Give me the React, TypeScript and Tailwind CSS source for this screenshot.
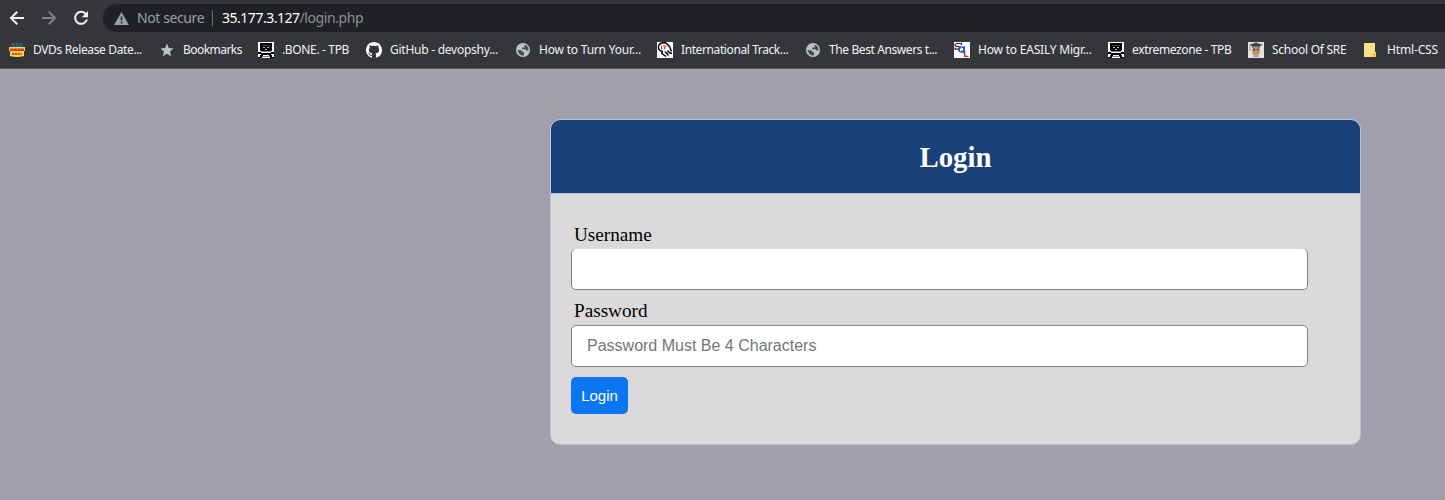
import type { ReactNode } from "react";

function DvdIcon() {
  return (
    <svg width="16" height="16" viewBox="0 0 16 16">
      <path d="M2 1H14L15 5H2Z" fill="#1f5068" />
      <path d="M3 2H5M7 2H9M11 2H13M4 4H6M8 4H12" stroke="#3f7488" />
      <path d="M0 5H16V9H15V14Q8 16 1 14V9H0Z" fill="#f7d84b" />
      <path d="M1 6.5H15V9H1Z" fill="#d8341c" />
      <path d="M4 7.6H5M8 7.6H9M11 7.6H12" stroke="#f0902c" />
      <path d="M3 10.8H13V13H3Z" fill="#e0532a" />
      <path d="M5 11.9H6M8 11.9H9M11 11.9H12" stroke="#f7d84b" />
    </svg>
  );
}

function StarIcon() {
  return (
    <svg width="16" height="16" viewBox="0 0 16 16">
      <path d="M8 1.6 9.8 6 14.6 6.4 11 9.5 12.1 14.2 8 11.7 3.9 14.2 5 9.5 1.4 6.4 6.2 6Z" fill="#bdc1c6" />
    </svg>
  );
}

function SkullIcon() {
  return (
    <svg width="16" height="16" viewBox="0 0 16 16">
      <path d="M0 0H16V16H0Z" fill="#fff" />
      <path d="M2 1H14V8L13 9.5H3L2 8Z" fill="#000" />
      <path d="M4 3.5H12" stroke="#444" />
      <path d="M5 5.5H7M9 5.5H11M7 7.5H9" stroke="#bbb" />
      <path d="M0 10H3V11H13V10H16V12H13V13H3V12H0Z" fill="#000" />
      <path d="M2 13H5V14H11V13H14V15H16V16H12V14.5H4V16H0V15H2Z" fill="#000" />
    </svg>
  );
}

function GithubIcon() {
  return (
    <svg width="16" height="16" viewBox="0 0 16 16" fill="#fff">
      <path d="M8 0C3.58 0 0 3.58 0 8c0 3.54 2.29 6.53 5.47 7.59.4.07.55-.17.55-.38 0-.19-.01-.82-.01-1.49-2.01.37-2.53-.49-2.69-.94-.09-.23-.48-.94-.82-1.13-.28-.15-.68-.52-.01-.53.63-.01 1.08.58 1.23.82.72 1.21 1.87.87 2.33.66.07-.52.28-.87.51-1.07-1.78-.2-3.64-.89-3.64-3.95 0-.87.31-1.59.82-2.15-.08-.2-.36-1.02.08-2.12 0 0 .67-.21 2.2.82.64-.18 1.32-.27 2-.27s1.36.09 2 .27c1.53-1.04 2.2-.82 2.2-.82.44 1.1.16 1.92.08 2.12.51.56.82 1.27.82 2.15 0 3.07-1.87 3.75-3.65 3.95.29.25.54.73.54 1.48 0 1.07-.01 1.93-.01 2.2 0 .21.15.46.55.38A8.01 8.01 0 0 0 16 8c0-4.42-3.58-8-8-8Z" />
    </svg>
  );
}

function GlobeIcon() {
  return (
    <svg width="16" height="16" viewBox="0 0 16 16">
      <circle cx="8" cy="8" r="7" fill="#bdc1c6" />
      <path d="M2.6 8.2H5.5Q7.6 8.2 7.6 10.3H9V13.3A5.5 5.5 0 0 1 2.6 8.2Z" fill="#484a4e" />
      <path d="M9.6 2.8A5.4 5.4 0 0 1 13.4 8.4H11.2L10.6 7.3H7.2V5.4H9.6Z" fill="#484a4e" />
    </svg>
  );
}

function TrackIcon() {
  return (
    <svg width="16" height="16" viewBox="0 0 16 16" fill="none">
      <path d="M0 0H16V16H0Z" fill="#fff" />
      <path d="M9 1Q4.5-.2 2.2 2.5Q.5 5.5 2.5 8Q4 9.3 6 9.5M9 1 12.5 4.5 14.5 9.5" stroke="#080808" strokeWidth="1.5" />
      <path d="M5 9.5V11.5L9 14.5M8 9.5 11.5 13.5M10.5 8.5 12 10.5 15 11.5" stroke="#080808" strokeWidth="1.5" />
      <path d="M4.5 3.5V7.5M5.8 4H9.5M7.7 4V7.5" stroke="#e33" strokeWidth="1.2" />
    </svg>
  );
}

function SqlIcon() {
  return (
    <svg width="16" height="16" viewBox="0 0 16 16" fill="none">
      <path d="M0 0H16V16H0Z" fill="#fff" />
      <path d="M7.5 3V1.5H3Q1 1.5 1 3T3.5 4.3Q6 4.3 6 5.8T4 7.2H1V5.5" stroke="#641622" strokeWidth="1.2" />
      <circle cx="7.5" cy="7.5" r="2.6" stroke="#1957c2" strokeWidth="1.4" />
      <path d="M7.5 8.5 10 11M10.5 4V10" stroke="#1957c2" strokeWidth="1.2" />
      <path d="M10.7 9.5V14.4H14.5" stroke="#f01818" strokeWidth="1.3" />
    </svg>
  );
}

function SchoolIcon() {
  return (
    <svg width="16" height="16" viewBox="0 0 16 16">
      <path d="M0 0H16V16H0Z" fill="#e5e3df" />
      <path d="M1 3 8 .5 15 3 8 5.5Z" fill="#39434c" />
      <path d="M4 4H12V6H4Z" fill="#68717a" />
      <path d="M2 4V9" stroke="#8c9197" />
      <circle cx="8" cy="8.7" r="4" fill="#cb8d54" />
      <path d="M5 7.5H7.3M8.7 7.5H11" stroke="#3d5874" strokeWidth="1.3" />
      <path d="M5 12 8 12.6 11 12 10 15H6Z" fill="#7c99b3" />
      <path d="M6 13.5H10" stroke="#d19f62" />
    </svg>
  );
}

function FolderIcon() {
  return (
    <svg width="16" height="16" viewBox="0 0 16 16">
      <path d="M1 1H12V10H13V15H1Z" fill="#ffe08a" />
      <path d="M9 11H13V15H10Z" fill="#f1c84f" />
    </svg>
  );
}

type Bookmark = { label: string; icon: ReactNode; box: string; spacing: string };

const bookmarks: Bookmark[] = [
  { label: "DVDs Release Date...", icon: <DvdIcon />, box: "w-[150px]", spacing: "tracking-[-0.36px]" },
  { label: "Bookmarks", icon: <StarIcon />, box: "w-[99px]", spacing: "tracking-[-0.55px]" },
  { label: ".BONE. - TPB", icon: <SkullIcon />, box: "w-[108px]", spacing: "tracking-[-0.35px]" },
  { label: "GitHub - devopshy...", icon: <GithubIcon />, box: "w-[149px]", spacing: "tracking-[-0.25px]" },
  { label: "How to Turn Your...", icon: <GlobeIcon />, box: "w-[142px]", spacing: "tracking-[-0.2px]" },
  { label: "International Track...", icon: <TrackIcon />, box: "w-[148px]", spacing: "tracking-[-0.4px]" },
  { label: "The Best Answers t...", icon: <GlobeIcon />, box: "w-[149px]", spacing: "tracking-[-0.4px]" },
  { label: "How to EASILY Migr...", icon: <SqlIcon />, box: "w-[154px]", spacing: "tracking-[-0.2px]" },
  { label: "extremezone - TPB", icon: <SkullIcon />, box: "w-[140px]", spacing: "tracking-[-0.36px]" },
  { label: "School Of SRE", icon: <SchoolIcon />, box: "w-[115px]", spacing: "tracking-[-0.26px]" },
  { label: "Html-CSS", icon: <FolderIcon />, box: "w-[80px]", spacing: "tracking-[-0.15px]" },
];

function Toolbar() {
  return (
    <div className="flex h-9 items-start pt-1">
      <div className="flex h-7 w-[103px] shrink-0 items-center gap-4 pl-[9px]">
        <svg width="16" height="16" viewBox="0 0 16 16" fill="none" stroke="#f1f3f4" strokeWidth="2">
          <path d="M15 8H2.5M8.2 1.8 2 8l6.2 6.2" />
        </svg>
        <svg width="16" height="16" viewBox="0 0 16 16" fill="none" stroke="#808185" strokeWidth="2">
          <path d="M1 8H13.5M7.8 1.8 14 8l-6.2 6.2" />
        </svg>
        <svg width="16" height="16" viewBox="0 0 16 16">
          <path d="M13 4.3A6 6 0 1 0 13.9 9.5" fill="none" stroke="#f1f3f4" strokeWidth="2" />
          <path d="M15 1V7.2H8.8Z" fill="#f1f3f4" />
        </svg>
      </div>
      <div className="flex h-7 flex-1 items-center rounded-l-full bg-[#202124] pl-[11px] text-sm whitespace-nowrap text-[#9aa0a6]">
        <svg width="15" height="13" viewBox="0 0 15 13">
          <path d="M7.5 0 15 13H0Z" fill="#9aa0a6" />
          <path d="M7.5 4.5V8.5M7.5 9.8V11.4" stroke="#202124" strokeWidth="1.5" />
        </svg>
        <span className="ml-2 w-[75px] tracking-[-0.4px]">Not secure</span>
        <span className="h-4 w-px bg-[#6b6e72]" />
        <span className="ml-[9px] tracking-[-0.48px] text-white">35.177.3.127</span>
        <span className="tracking-[-0.43px] text-[#8b9095]">/login.php</span>
      </div>
    </div>
  );
}

function BookmarksBar() {
  return (
    <div className="flex h-7 items-center pl-[9px] text-xs whitespace-nowrap text-[#f1f3f4]">
      {bookmarks.map((b) => (
        <div key={b.label} className={`flex shrink-0 items-center gap-2 ${b.box}`}>
          <span className="shrink-0">{b.icon}</span>
          <span className={b.spacing}>{b.label}</span>
        </div>
      ))}
    </div>
  );
}

export default function App() {
  return (
    <div className="flex h-[500px] w-[1445px] flex-col overflow-hidden bg-[#a09fab]">
      <header className="h-[69px] shrink-0 border-b border-[#58595d] bg-[#35363a] font-['Noto_Sans',sans-serif]">
        <Toolbar />
        <BookmarksBar />
      </header>
      <main className="flex flex-1 pt-[50px] pl-[550px]">
        <section className="h-[326px] w-[811px] overflow-hidden rounded-[10px] border border-[#b0c4de] bg-[#dbd9da]">
          <h2 className="flex h-[74px] items-center justify-center border-b border-[#b0c4de] bg-[#1b417a] pt-0.5 font-['Liberation_Serif',serif] text-[28.8px] font-bold text-white">
            Login
          </h2>
          <form className="flex flex-col items-start pt-7 pl-5" onSubmit={(e) => e.preventDefault()}>
            <label htmlFor="username" className="mb-px ml-[3px] flex h-[26px] items-center font-['Liberation_Serif',serif] text-[19.2px] text-black">
              Username
            </label>
            <input
              id="username"
              type="text"
              className="h-[41px] w-[737px] rounded-[5px] border border-t-0 border-[#808080] bg-white px-[15px] font-['Liberation_Sans',sans-serif] text-base outline-none"
            />
            <label htmlFor="password" className="mt-2 mb-px ml-[3px] flex h-[26px] items-center font-['Liberation_Serif',serif] text-[19.2px] text-black">
              Password
            </label>
            <input
              id="password"
              type="password"
              placeholder="Password Must Be 4 Characters"
              className="h-[42px] w-[737px] rounded-[5px] border border-[#808080] bg-white px-[15px] font-['Liberation_Sans',sans-serif] text-base outline-none placeholder:text-[#757575]"
            />
            <button type="submit" className="mt-[10px] h-[37px] w-[57px] rounded-[5px] bg-[#0b76f4] pt-px font-['Liberation_Sans',sans-serif] text-[15px] text-white">
              Login
            </button>
          </form>
        </section>
      </main>
    </div>
  );
}
